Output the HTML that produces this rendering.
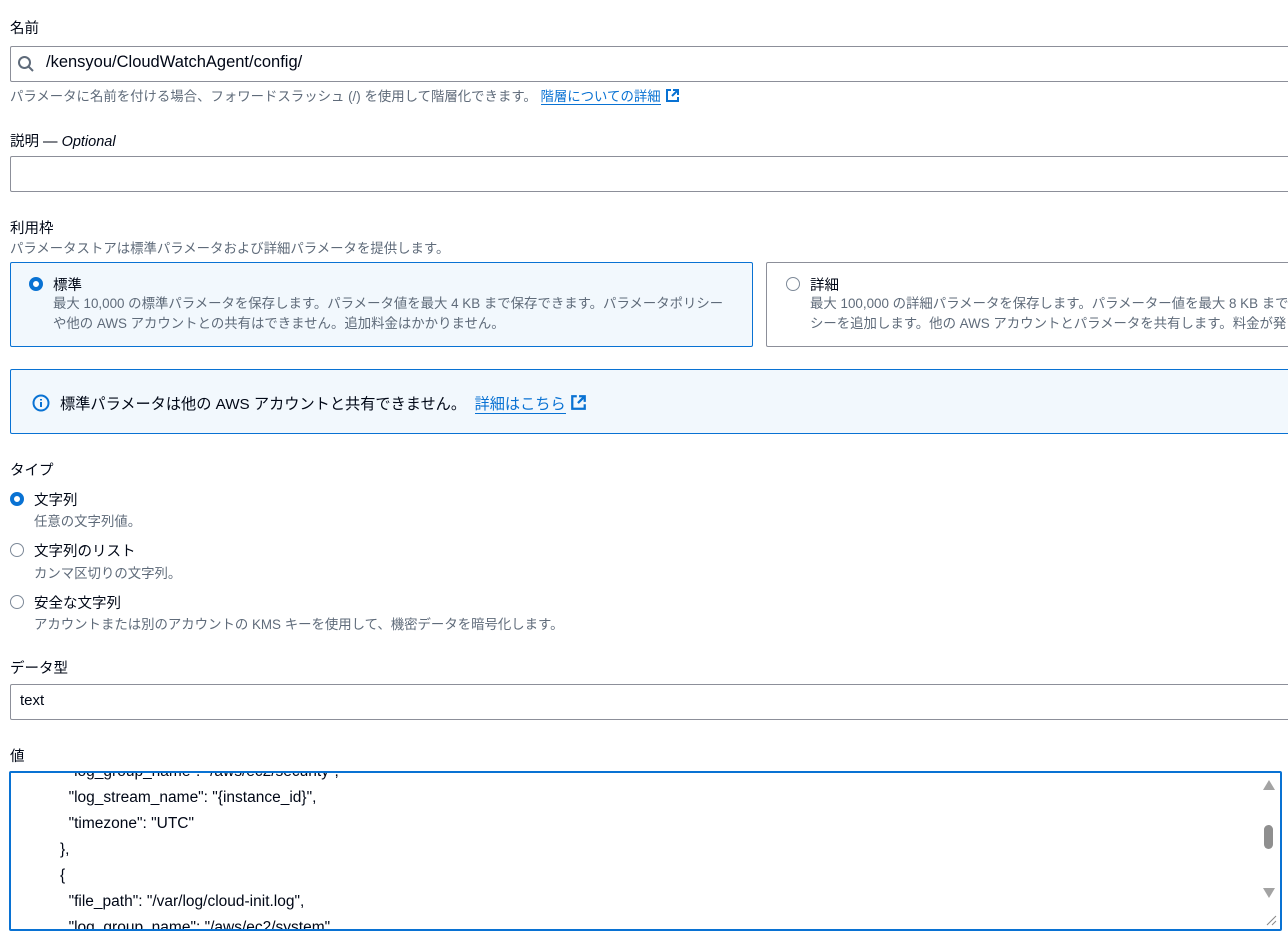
<!DOCTYPE html>
<html><head><meta charset="utf-8"><style>
*{box-sizing:border-box;margin:0;padding:0}
body{width:1288px;height:928px;overflow:hidden;background:#fff;font-family:"Liberation Sans","Noto Sans CJK JP",sans-serif;color:#000716;font-size:14px}
.a{position:absolute}
.lbl{font-size:14.5px;color:#000716}
.hint{font-size:13.4px;color:#5f6b7a;white-space:nowrap}
.inp{border:1px solid #8c8f99;border-radius:2px;background:#fff;left:10px;width:1290px}
.link{color:#0972d3;border-bottom:1px solid #0972d3}
.radio{width:14px;height:14px;border-radius:50%;border:1px solid #7d8998;background:#fff}
.radio.on{border:4px solid #0972d3}
svg.i{vertical-align:-2px;margin-left:4px}
</style></head><body>
<div class="a lbl" style="left:10px;top:17px">名前</div>
<div class="a inp" style="top:46px;height:36px"></div>
<svg class="a" style="left:17px;top:55px" width="18" height="18" viewBox="0 0 18 18"><circle cx="7.5" cy="7.5" r="5.5" fill="none" stroke="#5f6b7a" stroke-width="2"/><path d="M11.5 11.5L16 16" stroke="#5f6b7a" stroke-width="2"/></svg>
<div class="a" style="left:46px;top:53px;font-size:16.5px">/kensyou/CloudWatchAgent/config/</div>
<div class="a hint" style="left:10px;top:85px">パラメータに名前を付ける場合、フォワードスラッシュ (/) を使用して階層化できます。 <span class="link">階層についての詳細</span><svg class="i" width="15" height="15" viewBox="0 0 15 15"><path d="M6 2H2v11h11V9M8 2h5v5M13 2L7 8" fill="none" stroke="#0972d3" stroke-width="2"/></svg></div>
<div class="a lbl" style="left:10px;top:130px">説明 — <i>Optional</i></div>
<div class="a inp" style="top:156px;height:36px"></div>
<div class="a lbl" style="left:10px;top:217px">利用枠</div>
<div class="a hint" style="left:10px;top:237px">パラメータストアは標準パラメータおよび詳細パラメータを提供します。</div>
<div class="a" style="left:10px;top:262px;width:743px;height:85px;border:1px solid #0972d3;border-radius:2px;background:#f2f8fd"></div>
<div class="a radio on" style="left:29px;top:277px"></div>
<div class="a lbl" style="left:53px;top:274px">標準</div>
<div class="a hint" style="left:53px;top:294px;line-height:20px">最大 10,000 の標準パラメータを保存します。パラメータ値を最大 4 KB まで保存できます。パラメータポリシー<br>や他の AWS アカウントとの共有はできません。追加料金はかかりません。</div>
<div class="a" style="left:766px;top:262px;width:540px;height:85px;border:1px solid #8c8f99;border-radius:2px"></div>
<div class="a radio" style="left:786px;top:277px"></div>
<div class="a lbl" style="left:810px;top:274px">詳細</div>
<div class="a hint" style="left:810px;top:294px;line-height:20px">最大 100,000 の詳細パラメータを保存します。パラメーター値を最大 8 KB まで<br>シーを追加します。他の AWS アカウントとパラメータを共有します。料金が発</div>
<div class="a" style="left:10px;top:369px;width:1290px;height:65px;border:1px solid #0972d3;border-radius:2px;background:#f2f8fd"></div>
<svg class="a" style="left:32px;top:394px" width="18" height="18" viewBox="0 0 18 18"><circle cx="9" cy="9" r="7.5" fill="none" stroke="#0972d3" stroke-width="2"/><path d="M9 8v5M9 5v1.5" stroke="#0972d3" stroke-width="2"/></svg>
<div class="a" style="left:60px;top:392px;font-size:15.2px;white-space:nowrap">標準パラメータは他の AWS アカウントと共有できません。 &nbsp;<span class="link">詳細はこちら</span><svg class="i" width="17" height="17" viewBox="0 0 15 15"><path d="M6 2H2v11h11V9M8 2h5v5M13 2L7 8" fill="none" stroke="#0972d3" stroke-width="2"/></svg></div>
<div class="a lbl" style="left:10px;top:459px">タイプ</div>
<div class="a radio on" style="left:10px;top:492px"></div>
<div class="a lbl" style="left:34px;top:489px">文字列</div>
<div class="a hint" style="left:34px;top:510px">任意の文字列値。</div>
<div class="a radio" style="left:10px;top:543px"></div>
<div class="a lbl" style="left:34px;top:540px">文字列のリスト</div>
<div class="a hint" style="left:34px;top:562px">カンマ区切りの文字列。</div>
<div class="a radio" style="left:10px;top:595px"></div>
<div class="a lbl" style="left:34px;top:592px">安全な文字列</div>
<div class="a hint" style="left:34px;top:613px">アカウントまたは別のアカウントの KMS キーを使用して、機密データを暗号化します。</div>
<div class="a lbl" style="left:10px;top:657px">データ型</div>
<div class="a inp" style="top:684px;height:36px"></div>
<div class="a" style="left:20px;top:692px;font-size:15px">text</div>
<div class="a lbl" style="left:10px;top:745px">値</div>
<div class="a" style="left:9px;top:771px;width:1273px;height:160px;border:2px solid #0972d3;border-radius:2px;overflow:hidden">
<div class="a" style="left:49px;top:-14px;font-size:15.5px;line-height:26px;white-space:pre">  "log_group_name": "/aws/ec2/security",
  "log_stream_name": "{instance_id}",
  "timezone": "UTC"
},
{
  "file_path": "/var/log/cloud-init.log",
  "log_group_name": "/aws/ec2/system",</div>
<div class="a" style="right:0;top:0;width:22px;height:160px;background:#fff"></div>
<svg class="a" style="right:4px;top:6px" width="14" height="12"><path d="M7 1L13 11H1z" fill="#a3a3a3"/></svg>
<div class="a" style="right:7px;top:52px;width:9px;height:24px;border-radius:5px;background:#8f8f8f"></div>
<svg class="a" style="right:4px;top:114px" width="14" height="12"><path d="M1 1H13L7 11z" fill="#a3a3a3"/></svg>
<svg class="a" style="right:2px;top:140px" width="14" height="14"><path d="M12 3L3 12M12 8L8 12" stroke="#888" stroke-width="1"/></svg>
</div>
</body></html>
